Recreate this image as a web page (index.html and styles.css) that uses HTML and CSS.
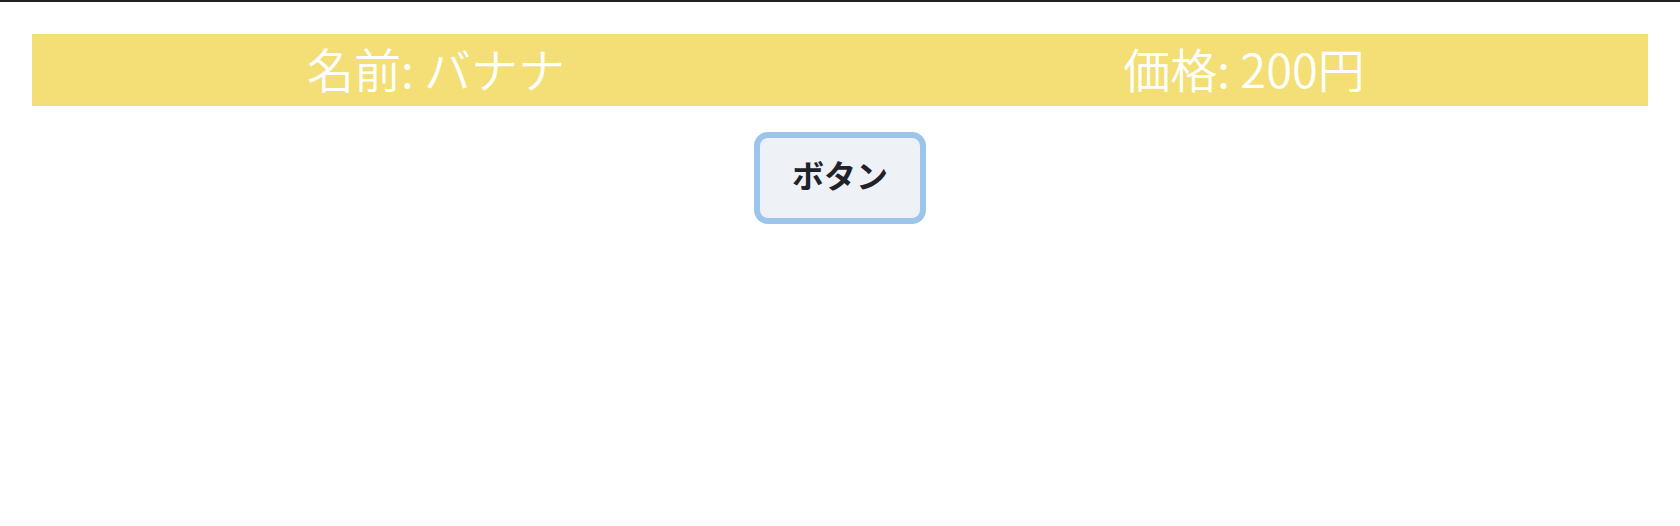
FILE: index.html
```html
<!DOCTYPE html>
<html lang="ja">
<head>
    <meta charset="utf-8">
    <title>商品</title>
    <link rel="stylesheet" href="styles.css">
</head>
<body>
    <div class="topline"></div>
    <div class="container">
        <div class="item-bar">
            <div class="item-cell">名前: バナナ</div>
            <div class="item-cell">価格: 200円</div>
        </div>
        <div class="button-row">
            <button class="main-button">ボタン</button>
        </div>
    </div>
</body>
</html>
```

FILE: styles.css
```css
* {
    box-sizing: border-box;
    font-family: "Noto Sans CJK JP", "Noto Sans", sans-serif;
}
body {
    margin: 0;
    background-color: #fff;
}
.topline {
    height: 2px;
    background-color: #222;
}
.container {
    padding: 32px;
}
.item-bar {
    display: flex;
    align-items: center;
    height: 72px;
    background-color: #f3df76;
}
.item-cell {
    flex: 1;
    padding-bottom: 6px;
    text-align: center;
    color: #fff;
    font-size: 47px;
    font-weight: 350;
    line-height: 1;
}
.button-row {
    display: flex;
    justify-content: center;
    margin-top: 26px;
}
.main-button {
    padding: 18px 32px 26px;
    font-size: 32px;
    font-weight: bold;
    line-height: 36px;
    color: #1f2329;
    background-color: #eef1f6;
    border: 6px solid #9dc4ea;
    border-radius: 14px;
}
```
